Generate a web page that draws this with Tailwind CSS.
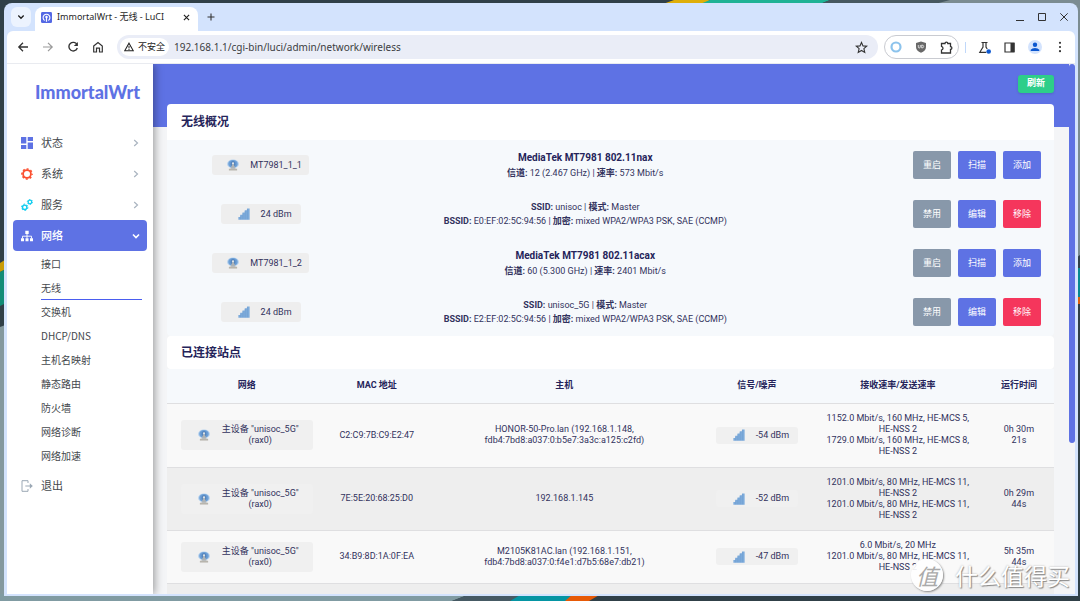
<!DOCTYPE html>
<html lang="zh-CN">
<head>
<meta charset="utf-8">
<title>ImmortalWrt - 无线 - LuCI</title>
<script src="https://cdn.jsdelivr.net/npm/@tailwindcss/browser@4"></script>
</head>
<body class="relative h-screen overflow-hidden bg-[#304048] pt-[3px] pr-[2px] pb-[5px] pl-1 font-['Noto_Sans','Noto_Sans_CJK_SC',sans-serif] text-[#1f1f1f]">

<!-- shared icons -->
<svg class="hidden" aria-hidden="true">
  <symbol id="radio" viewBox="0 0 16 16">
    <ellipse cx="8" cy="6.500" rx="7.800" ry="6" fill="#b3d0ee"/>
    <ellipse cx="8" cy="6.500" rx="6.300" ry="5.300" fill="#6c9fd6"/>
    <ellipse cx="8" cy="6.500" rx="3.300" ry="3.800" fill="#5585bd"/>
    <path d="M8 5 11.500 13h-7Z" fill="#aeb3b6"/>
    <circle cx="8" cy="5.800" r="1.500" fill="#dfe3e6"/>
    <path d="M2.500 13h11v2.400h-11Z" fill="#b8b5ad"/>
  </symbol>
  <symbol id="bars" viewBox="0 0 16 16">
    <path d="M.5 15.500v-3.500h2.500v-3h3v-3h3v-3h3v-2.500h3.500v15Z" fill="#7dabdb"/>
    <path d="M3.500 15V10M6.500 15V7M9.500 15V4M12.500 15V1.500" stroke="#6c9ccf" stroke-width=".7" fill="none"/>
  </symbol>
  <symbol id="chev" viewBox="0 0 8 8"><path d="M2.200 1 5.500 4 2.200 7" fill="none" stroke="currentColor" stroke-width="1.200"/></symbol>
</svg>

<!-- wallpaper -->
<svg class="absolute inset-0 -z-10 h-full w-full" viewBox="0 0 1080 601" preserveAspectRatio="none" aria-hidden="true">
  <path d="M0 0h1080v601H0z" fill="#304048"/>
  <path d="M674 0h36l-7 4h-40z" fill="#deae08"/><path d="M710 0h120l-10 4H700z" fill="#1fb295"/>
  <path d="M830 0h120v4H820z" fill="#465860"/><path d="M950 0h130v255l-12 9V4H935z" fill="#7b8c91"/>
  <path d="M0 263l8-5v10l-8 4z" fill="#c99c07"/><path d="M0 272l8-4v34l-8 4z" fill="#128c77"/>
  <path d="M0 327l8-3v277H0z" fill="#84999f"/><path d="M0 594h470l-18 7H0z" fill="#809ba2"/>
  <path d="M470 594h60l-20 7h-58z" fill="#465a64"/><path d="M522 594h55l-10 7h-57z" fill="#0595a3"/><path d="M573 594h28l-12 7h-24z" fill="#e75a07"/>
  <path d="M1070 268h10v29h-10z" fill="#078891"/><path d="M1070 297h10v7h-10z" fill="#df5f0c"/>
</svg>

<div class="flex h-full flex-col overflow-hidden rounded-t-lg bg-[#d3e3fd] px-[3px] pb-[2px]">

  <!-- tab strip -->
  <header class="flex h-7 shrink-0 items-end pl-1">
    <button aria-label="搜索标签页" class="mb-1 flex h-5 w-5 items-center justify-center rounded-md bg-[#ecf3fe]">
      <svg class="h-2 w-2" viewBox="0 0 8 8"><path d="M1.300 2.500 4 5.300 6.700 2.500" fill="none" stroke="#1f1f1f" stroke-width="1.300"/></svg>
    </button>
    <div class="ml-1 flex h-6 w-[163px] items-center rounded-t-lg bg-white pb-1 pl-[6px]">
      <svg class="h-[11px] w-[11px] shrink-0" viewBox="0 0 12 12"><rect width="12" height="12" rx="1.500" fill="#5468e4"/><path d="M4 9.200A3.700 3.700 0 1 1 8 9.200" fill="none" stroke="#fff" stroke-width="1.200"/><path d="M6 5v5.500" stroke="#fff" stroke-width="1.300"/><circle cx="6" cy="5.500" r="1.300" fill="#fff"/></svg>
      <span class="ml-[5px] flex-1 text-[9px] whitespace-nowrap">ImmortalWrt - 无线 - LuCI</span>
      <button aria-label="关闭标签页" class="mr-2"><svg class="h-[7px] w-[7px]" viewBox="0 0 8 8"><path d="M1 1l6 6M7 1 1 7" stroke="#1f1f1f" stroke-width="1.300"/></svg></button>
    </div>
    <button aria-label="新标签页" class="mb-[10px] ml-[9px] flex"><svg class="h-2 w-2" viewBox="0 0 8 8"><path d="M4 .5v7M.5 4h7" stroke="#333" stroke-width="1.100"/></svg></button>
    <div class="mr-[7px] mb-[10px] ml-auto flex items-center gap-[14px] text-[#333]">
      <button aria-label="最小化" class="flex"><svg class="h-2 w-2" viewBox="0 0 8 8"><path d="M0 7.500h8" stroke="currentColor"/></svg></button>
      <button aria-label="最大化" class="flex"><svg class="h-2 w-2" viewBox="0 0 8 8"><path d="M.5.5h7v7h-7z" fill="none" stroke="currentColor"/></svg></button>
      <button aria-label="关闭" class="flex"><svg class="h-2 w-2" viewBox="0 0 8 8"><path d="M.3.3l7.400 7.400M7.700.3.3 7.700" stroke="currentColor"/></svg></button>
    </div>
  </header>

  <!-- toolbar -->
  <div class="flex h-[33px] shrink-0 items-center rounded-t-md border-b border-[#e9ebf0] bg-white pr-[9px] pl-[10px]">
    <nav class="flex items-center gap-[13px]" aria-label="浏览器导航">
      <button aria-label="后退"><svg class="h-3 w-3" viewBox="0 0 12 12"><path d="M11 6H2M6 1.800 1.800 6 6 10.200" fill="none" stroke="#333" stroke-width="1.300"/></svg></button>
      <button aria-label="前进"><svg class="h-3 w-3" viewBox="0 0 12 12"><path d="M1 6h9M6 1.800 10.200 6 6 10.200" fill="none" stroke="#999" stroke-width="1.200"/></svg></button>
      <button aria-label="重新加载"><svg class="h-3 w-3" viewBox="0 0 12 12"><path d="M10 3.600A4.300 4.300 0 1 0 10.300 7" fill="none" stroke="#333" stroke-width="1.400"/><path d="M10.900 1v4.100H6.800z" fill="#333"/></svg></button>
      <button aria-label="主页"><svg class="h-3 w-3" viewBox="0 0 12 12"><path d="M1.700 5 6 1.500 10.300 5v6H7.500V7.200h-3V11H1.700z" fill="none" stroke="#333" stroke-width="1.200"/></svg></button>
    </nav>
    <div class="ml-[13px] flex h-6 min-w-0 flex-1 items-center rounded-full bg-[#eaedf7] px-[3px]">
      <button class="flex h-[18px] shrink-0 items-center gap-1 rounded-full bg-white px-[4px] text-[9px]">
        <svg class="h-[10px] w-[10px]" viewBox="0 0 10 10"><path d="M5 1.200 9.300 8.800H.7z" fill="none" stroke="#222" stroke-width="1.100"/><path d="M5 4v2.400M5 7v1" stroke="#222"/></svg>不安全
      </button>
      <input aria-label="地址" value="192.168.1.1/cgi-bin/luci/admin/network/wireless" class="ml-[5px] min-w-0 flex-1 bg-transparent text-[10px] text-[#3c3d42] outline-none">
      <button aria-label="收藏" class="mr-[7px]"><svg class="h-[13px] w-[13px]" viewBox="0 0 12 12"><path d="M6 1.300 7.400 4.500l3.400.3-2.600 2.300.8 3.400L6 8.700l-3 1.800.8-3.400L1.200 4.800l3.400-.3z" fill="none" stroke="#333"/></svg></button>
    </div>
    <div class="ml-[6px] flex h-6 items-center gap-[13px] rounded-full border border-[#c9cbd1] px-[5px]">
      <svg class="h-3 w-3" viewBox="0 0 12 12"><circle cx="6" cy="6" r="4.500" fill="none" stroke="#8cc3ec" stroke-width="2.200"/></svg>
      <svg class="h-3 w-3" viewBox="0 0 12 12"><path d="M6 .5 11 2v4c0 3-2 4.700-5 5.800C3 10.700 1 9 1 6V2z" fill="#686868"/><path d="M3.300 4v2q0 1 1 1t1-1V4M6.700 4v3q2 0 2-1.500T6.700 4z" fill="none" stroke="#eee" stroke-width=".8"/></svg>
      <svg class="h-[13px] w-[13px]" viewBox="0 0 13 13"><path d="M1.500 2.500H5a1.400 1.400 0 0 1 2.800 0h2.700v3.200a1.400 1.400 0 0 1 0 2.800V12h-9V9q1.500-.6 1.500-1.800T1.500 5.400z" fill="none" stroke="#333" stroke-width="1.300"/></svg>
    </div>
    <span class="ml-[6px] h-[11px] w-px bg-[#c0d8fa]"></span>
    <div class="ml-[12px] flex items-center gap-3">
      <button aria-label="实验"><svg class="h-[13px] w-[13px]" viewBox="0 0 13 13"><path d="M3.500 1.500h6M5 1.500V6L1.800 11.300h6.500M8 1.500V6l1.200 2" fill="none" stroke="#333" stroke-width="1.200"/><circle cx="10.700" cy="10.500" r="2.300" fill="#0b57d0"/></svg></button>
      <button aria-label="侧边栏"><svg class="h-[13px] w-[13px]" viewBox="0 0 13 13"><path d="M2 2h9v9H2z" fill="none" stroke="#333" stroke-width="1.200"/><path d="M7.500 2H11.500v9h-4z" fill="#333"/></svg></button>
      <button aria-label="用户"><svg class="h-[14px] w-[14px]" viewBox="0 0 14 14"><circle cx="7" cy="7" r="7" fill="#d3e3fd"/><circle cx="7" cy="4.800" r="2.200" fill="#0b57d0"/><path d="M2.700 11V9.800Q4 8 7 8t4.300 1.800V11z" fill="#0b57d0"/></svg></button>
      <button aria-label="菜单"><svg class="h-3 w-3" viewBox="0 0 12 12" fill="#333"><circle cx="6" cy="1.800" r="1.100"/><circle cx="6" cy="6" r="1.100"/><circle cx="6" cy="10.200" r="1.100"/></svg></button>
    </div>
  </div>

  <!-- page -->
  <div class="flex min-h-0 flex-1 overflow-hidden bg-[#f4f5f7] font-['Roboto','Noto_Sans_CJK_SC',sans-serif]">
    <aside class="z-10 w-[146px] shrink-0 bg-white px-[6px] font-['Noto_Sans_CJK_SC',sans-serif] shadow-[2px_0_8px_rgba(0,0,0,0.35)]">
      <a href="#" class="flex h-[63px] items-center justify-center pl-[15px] pb-[7px] font-['Lato'] text-[18px] font-black text-[#5e72e4]">ImmortalWrt</a>
      <nav class="text-[11px] text-[#44484d]" aria-label="主菜单">
        <a href="#" class="flex h-[31px] items-center pr-[7px] pl-2"><svg class="mr-2 h-3 w-3" viewBox="0 0 12 12" fill="#5e72e4"><path d="M0 0h5.300v6.500H0zM6.700 0H12v4H6.700zM0 8h5.300v4H0zM6.700 5.500H12V12H6.700z"/></svg>状态<svg class="ml-auto h-2 w-2 text-[#aab4c0]"><use href="#chev"/></svg></a>
        <a href="#" class="flex h-[31px] items-center pr-[7px] pl-2"><svg class="mr-2 h-3 w-3" viewBox="0 0 12 12" fill="none" stroke="#fb5030"><circle cx="6" cy="6" r="3.900" stroke-width="1.800"/><circle cx="6" cy="6" r="5.100" stroke-width="1.500" stroke-dasharray="2 2.005" stroke-dashoffset="1"/></svg>系统<svg class="ml-auto h-2 w-2 text-[#aab4c0]"><use href="#chev"/></svg></a>
        <a href="#" class="flex h-[31px] items-center pr-[7px] pl-2"><svg class="mr-2 h-3 w-3" viewBox="0 0 12 12" fill="none" stroke="#11cdef"><circle cx="3.700" cy="8.300" r="2.200" stroke-width="1.400"/><circle cx="3.700" cy="8.300" r="3.200" stroke-width="1" stroke-dasharray="1.675 1.675"/><circle cx="8.900" cy="3" r="1.800" stroke-width="1.300"/><circle cx="8.900" cy="3" r="2.600" stroke-width=".9" stroke-dasharray="1.361 1.361"/></svg>服务<svg class="ml-auto h-2 w-2 text-[#aab4c0]"><use href="#chev"/></svg></a>
        <a href="#" class="flex h-[31px] items-center rounded bg-[#5e72e4] pr-[7px] pl-2 font-medium text-white"><svg class="mr-2 h-3 w-3" viewBox="0 0 12 12" fill="#fff"><path d="M4.300.8h3.400V4H4.300zM0 8.200h3v3H0zM4.500 8.200h3v3h-3zM9 8.200h3v3H9z"/><path d="M6 4v4.500M1.500 8.500V6.200h9v2.300" fill="none" stroke="#fff" stroke-width=".9"/></svg>网络<svg class="ml-auto h-2 w-2" viewBox="0 0 8 8"><path d="M1 2.500 4 5.500 7 2.500" fill="none" stroke="#fff" stroke-width="1.600"/></svg></a>
        <ul class="pt-px pr-[5px] pb-[2px] pl-7 text-[10px] leading-6">
          <li><a href="#" class="block h-6">接口</a></li>
          <li><a href="#" class="block h-6 border-b border-[#4a5df0]">无线</a></li>
          <li><a href="#" class="block h-6">交换机</a></li>
          <li><a href="#" class="block h-6">DHCP/DNS</a></li>
          <li><a href="#" class="block h-6">主机名映射</a></li>
          <li><a href="#" class="block h-6">静态路由</a></li>
          <li><a href="#" class="block h-6">防火墙</a></li>
          <li><a href="#" class="block h-6">网络诊断</a></li>
          <li><a href="#" class="block h-6">网络加速</a></li>
        </ul>
        <a href="#" class="flex h-[31px] items-center pl-2"><svg class="mr-2 h-3 w-3" viewBox="0 0 12 12" fill="none" stroke="#9ba8b5"><path d="M7 3V.7H1v10.600h6V9"/><path d="M4.300 6H10"/><path d="M8.800 3.300 11.800 6l-3 2.700z" fill="#9ba8b5" stroke="none"/></svg>退出</a>
      </nav>
    </aside>

    <main class="min-w-0 flex-1 bg-[linear-gradient(#5e72e4_63px,transparent_63px)] pr-[15px] pl-[14px] text-[9px] text-[#32325d]">
      <div class="flex h-10 items-center justify-end">
        <button class="h-[18px] w-9 rounded-[3px] bg-[#2dce89] text-[9px] font-bold text-white shadow-sm">刷新</button>
      </div>

      <section>
        <h2 class="flex h-9 items-center rounded-t-[4px] bg-white px-[14px] text-[12px] font-bold text-[#25245a]">无线概况</h2>
        <table class="w-full table-fixed border-collapse rounded-b bg-[#f6f9fc] text-center leading-[14px]">
          <colgroup><col class="w-[21.1%]"><col class="w-[52.1%]"><col class="w-[26.8%]"></colgroup>
          <tbody>
            <tr class="h-[49px]">
              <td class="p-0"><span class="inline-flex h-5 items-center gap-[11px] rounded-[3px] bg-[#eee] pr-[7px] pl-[15px] align-middle"><svg class="h-3 w-3"><use href="#radio"/></svg>MT7981_1_1</span></td>
              <td class="p-0"><div class="text-[10px] font-bold leading-4 text-[#25245a]">MediaTek MT7981 802.11nax</div><div><b>信道:</b> 12 (2.467 GHz) | <b>速率:</b> 573 Mbit/s</div></td>
              <td class="p-0"><div class="flex justify-end gap-[7px] pr-[13px] text-white"><button class="h-7 w-[38px] rounded-[2px] bg-[#8898aa]">重启</button><button class="h-7 w-[38px] rounded-[2px] bg-[#5e72e4]">扫描</button><button class="h-7 w-[38px] rounded-[2px] bg-[#5e72e4]">添加</button></div></td>
            </tr>
            <tr class="h-[49px]">
              <td class="p-0"><span class="inline-flex h-5 items-center gap-[11px] rounded-[3px] bg-[#eee] pr-[9px] pl-[17px] align-middle"><svg class="h-3 w-3"><use href="#bars"/></svg>24 dBm</span></td>
              <td class="p-0"><div><b>SSID:</b> unisoc | <b>模式:</b> Master</div><div><b>BSSID:</b> E0:EF:02:5C:94:56 | <b>加密:</b> mixed WPA2/WPA3 PSK, SAE (CCMP)</div></td>
              <td class="p-0"><div class="flex justify-end gap-[7px] pr-[13px] text-white"><button class="h-7 w-[38px] rounded-[2px] bg-[#8898aa]">禁用</button><button class="h-7 w-[38px] rounded-[2px] bg-[#5e72e4]">编辑</button><button class="h-7 w-[38px] rounded-[2px] bg-[#f5365c]">移除</button></div></td>
            </tr>
            <tr class="h-[49px]">
              <td class="p-0"><span class="inline-flex h-5 items-center gap-[11px] rounded-[3px] bg-[#eee] pr-[7px] pl-[15px] align-middle"><svg class="h-3 w-3"><use href="#radio"/></svg>MT7981_1_2</span></td>
              <td class="p-0"><div class="text-[10px] font-bold leading-4 text-[#25245a]">MediaTek MT7981 802.11acax</div><div><b>信道:</b> 60 (5.300 GHz) | <b>速率:</b> 2401 Mbit/s</div></td>
              <td class="p-0"><div class="flex justify-end gap-[7px] pr-[13px] text-white"><button class="h-7 w-[38px] rounded-[2px] bg-[#8898aa]">重启</button><button class="h-7 w-[38px] rounded-[2px] bg-[#5e72e4]">扫描</button><button class="h-7 w-[38px] rounded-[2px] bg-[#5e72e4]">添加</button></div></td>
            </tr>
            <tr class="h-[49px]">
              <td class="p-0"><span class="inline-flex h-5 items-center gap-[11px] rounded-[3px] bg-[#eee] pr-[9px] pl-[17px] align-middle"><svg class="h-3 w-3"><use href="#bars"/></svg>24 dBm</span></td>
              <td class="p-0"><div><b>SSID:</b> unisoc_5G | <b>模式:</b> Master</div><div><b>BSSID:</b> E2:EF:02:5C:94:56 | <b>加密:</b> mixed WPA2/WPA3 PSK, SAE (CCMP)</div></td>
              <td class="p-0"><div class="flex justify-end gap-[7px] pr-[13px] text-white"><button class="h-7 w-[38px] rounded-[2px] bg-[#8898aa]">禁用</button><button class="h-7 w-[38px] rounded-[2px] bg-[#5e72e4]">编辑</button><button class="h-7 w-[38px] rounded-[2px] bg-[#f5365c]">移除</button></div></td>
            </tr>
          </tbody>
        </table>
      </section>

      <section>
        <h2 class="flex h-[33px] items-center rounded-[4px] bg-white px-[14px] text-[12px] font-bold text-[#25245a]">已连接站点</h2>
        <table class="w-full table-fixed border-collapse text-center leading-[11px]">
          <colgroup><col class="w-[18%]"><col class="w-[11.3%]"><col class="w-[31%]"><col class="w-[12.4%]"><col class="w-[19.4%]"><col class="w-[7.9%]"></colgroup>
          <thead>
            <tr class="h-[34px] bg-[#f6f9fc] text-[#25245a]"><th>网络</th><th>MAC 地址</th><th>主机</th><th>信号/噪声</th><th>接收速率/发送速率</th><th>运行时间</th></tr>
          </thead>
          <tbody>
            <tr class="h-16 border-t border-[#dfdfe1] bg-[#f9f9f9]">
              <td class="p-0"><span class="inline-flex h-[30px] w-[132px] items-center gap-[12px] rounded-[3px] bg-[#f0f0f0] pl-[17px] align-middle"><svg class="h-3 w-3 shrink-0"><use href="#radio"/></svg><span>主设备 "unisoc_5G"<br>(rax0)</span></span></td>
              <td class="p-0">C2:C9:7B:C9:E2:47</td>
              <td class="p-0">HONOR-50-Pro.lan (192.168.1.148,<br>fdb4:7bd8:a037:0:b5e7:3a3c:a125:c2fd)</td>
              <td class="p-0"><span class="inline-flex h-[17px] items-center gap-[11px] rounded-[3px] bg-[#f0f0f0] pr-[9px] pl-[17px] align-middle"><svg class="h-3 w-3"><use href="#bars"/></svg>-54 dBm</span></td>
              <td class="p-0">1152.0 Mbit/s, 160 MHz, HE-MCS 5,<br>HE-NSS 2<br>1729.0 Mbit/s, 160 MHz, HE-MCS 8,<br>HE-NSS 2</td>
              <td class="p-0">0h 30m<br>21s</td>
            </tr>
            <tr class="h-[63px] border-t border-[#dfdfe1] bg-[#eee]">
              <td class="p-0"><span class="inline-flex h-[30px] w-[132px] items-center gap-[12px] rounded-[3px] bg-[#f0f0f0] pl-[17px] align-middle"><svg class="h-3 w-3 shrink-0"><use href="#radio"/></svg><span>主设备 "unisoc_5G"<br>(rax0)</span></span></td>
              <td class="p-0">7E:5E:20:68:25:D0</td>
              <td class="p-0">192.168.1.145</td>
              <td class="p-0"><span class="inline-flex h-[17px] items-center gap-[11px] rounded-[3px] bg-[#f0f0f0] pr-[9px] pl-[17px] align-middle"><svg class="h-3 w-3"><use href="#bars"/></svg>-52 dBm</span></td>
              <td class="p-0">1201.0 Mbit/s, 80 MHz, HE-MCS 11,<br>HE-NSS 2<br>1201.0 Mbit/s, 80 MHz, HE-MCS 11,<br>HE-NSS 2</td>
              <td class="p-0">0h 29m<br>44s</td>
            </tr>
            <tr class="h-[53px] border-y border-[#dfdfe1] bg-[#f9f9f9]">
              <td class="p-0"><span class="inline-flex h-[30px] w-[132px] items-center gap-[12px] rounded-[3px] bg-[#f0f0f0] pl-[17px] align-middle"><svg class="h-3 w-3 shrink-0"><use href="#radio"/></svg><span>主设备 "unisoc_5G"<br>(rax0)</span></span></td>
              <td class="p-0">34:B9:8D:1A:0F:EA</td>
              <td class="p-0">M2105K81AC.lan (192.168.1.151,<br>fdb4:7bd8:a037:0:f4e1:d7b5:68e7:db21)</td>
              <td class="p-0"><span class="inline-flex h-[17px] items-center gap-[11px] rounded-[3px] bg-[#f0f0f0] pr-[9px] pl-[17px] align-middle"><svg class="h-3 w-3"><use href="#bars"/></svg>-47 dBm</span></td>
              <td class="p-0">6.0 Mbit/s, 20 MHz<br>1201.0 Mbit/s, 80 MHz, HE-MCS 11,<br>HE-NSS 2</td>
              <td class="p-0">5h 35m<br>44s</td>
            </tr>
            <tr class="h-16 bg-[#eee]"><td colspan="6"></td></tr>
          </tbody>
        </table>
      </section>
    </main>
    <div class="w-[6px] shrink-0" aria-hidden="true"><div class="h-[71.500%] rounded-full bg-[#5e72e4]"></div></div>
  </div>
</div>

<!-- watermark -->
<div class="absolute right-[10px] bottom-[10px] z-20 flex items-center gap-3 font-['Noto_Sans_CJK_SC',sans-serif] text-[23px] leading-8 text-white [text-shadow:1px_1px_1px_#888,0_0_2px_#aaa]">
  <span class="flex h-8 w-8 items-center justify-center rounded-full bg-white/90 text-[22px] leading-none text-[#aaa] italic shadow-[1px_1px_2px_#888] [text-shadow:none]">值</span>什么值得买
</div>
</body>
</html>
